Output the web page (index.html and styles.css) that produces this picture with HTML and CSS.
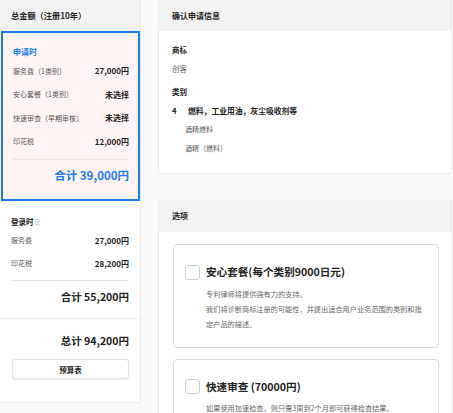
FILE: index.html
```html
<!DOCTYPE html>
<html lang="zh">
<head>
<meta charset="utf-8">
<link rel="stylesheet" href="styles.css">
</head>
<body>
<div class="page">
  <aside class="summary">
    <div class="sum-head">总金额（注册10年）</div>
    <div class="apply">
      <div class="apply-title">申请时</div>
      <div class="row"><span>服务费（1类别）</span><b>27,000円</b></div>
      <div class="row"><span>安心套餐（1类别）</span><b>未选择</b></div>
      <div class="row"><span>快速审查（早期审核）</span><b>未选择</b></div>
      <div class="row"><span>印花税</span><b>12,000円</b></div>
      <div class="subtotal blue">合计 39,000円</div>
    </div>
    <div class="reg">
      <div class="reg-title">登录时<span>※</span></div>
      <div class="row"><span>服务费</span><b>27,000円</b></div>
      <div class="row"><span>印花税</span><b>28,200円</b></div>
      <div class="subtotal">合计 55,200円</div>
    </div>
    <div class="total">
      <div class="total-amt">总计 94,200円</div>
      <button class="budget">预算表</button>
    </div>
  </aside>
  <main class="main">
    <section class="card">
      <div class="card-head">确认申请信息</div>
      <div class="card-body info">
        <div class="lbl">商标</div>
        <div class="val">创客</div>
        <div class="lbl lbl2">类别</div>
        <div class="cls"><span class="num">4</span><span>燃料，工业用油，灰尘吸收剂等</span></div>
        <div class="item">酒精燃料</div>
        <div class="item">酒精（燃料）</div>
      </div>
    </section>
    <section class="card card2">
      <div class="card-head">选项</div>
      <div class="options">
        <div class="opt">
          <div class="opt-head"><span class="chk"></span><span class="opt-title">安心套餐(每个类别9000日元)</span></div>
          <div class="opt-desc">专利律师将提供强有力的支持。<br>我们将诊断商标注册的可能性，并提出适合用户业务范围的类别和指定产品的描述。</div>
        </div>
        <div class="opt">
          <div class="opt-head"><span class="chk"></span><span class="opt-title">快速审查 (70000円)</span></div>
          <div class="opt-desc">如果使用加速检查，则只需3周到2个月即可获得检查结果。</div>
        </div>
      </div>
    </section>
  </main>
</div>
</body>
</html>
```
FILE: styles.css
```css
* { box-sizing: border-box; }
html, body { margin: 0; padding: 0; }
body {
  background: #fafafa;
  font-family: "Noto Sans CJK SC", "Noto Sans", sans-serif;
  color: #222;
  width: 453px;
  height: 413px;
  overflow: hidden;
}
.page {
  display: flex;
  align-items: flex-start;
  gap: 17px;
}
.summary {
  width: 141px;
  flex: none;
  background: #fff;
  border-right: 1px solid #ececec;
  border-bottom: 1px solid #ececec;
}
.sum-head {
  height: 31px;
  background: #f2f2f2;
  font-size: 8.2px;
  font-weight: 700;
  line-height: 31px;
  padding-left: 11px;
}
.apply {
  margin-left: 1px;
  border: 2px solid #1a7cf2;
  background: #fff4f3;
  padding: 14px 9px 16px 10px;
  height: 170px;
}
.apply-title {
  font-size: 8px;
  font-weight: 700;
  color: #1a7cf2;
  line-height: 10px;
  margin-bottom: 2px;
}
.row {
  height: 23.5px;
  display: flex;
  align-items: center;
  justify-content: space-between;
  font-size: 7px;
  color: #555;
}
.row b {
  font-size: 8px;
  color: #222;
  font-weight: 700;
}
.subtotal {
  margin-top: 6px;
  border-top: 1px solid #e6e6e6;
  padding-top: 8px;
  text-align: right;
  font-size: 10.5px;
  font-weight: 700;
  line-height: 16px;
}
.subtotal.blue {
  color: #1a7cf2;
  font-size: 11.5px;
  padding-top: 7px;
}
.reg {
  padding: 16px 11px 13px 11px;
  border-bottom: 1px solid #eeeeee;
}
.reg .row { height: 23px; }
.reg-title {
  font-size: 7.5px;
  font-weight: 700;
  line-height: 10px;
  margin-bottom: 1.5px;
}
.reg-title span { color: #999; font-weight: 400; }
.reg .subtotal { margin-top: 5.5px; }
.total {
  padding: 14px 11px 23px 12px;
}
.total-amt {
  text-align: right;
  font-size: 10.5px;
  font-weight: 700;
  line-height: 16px;
}
.budget {
  display: block;
  width: 100%;
  height: 20px;
  margin-top: 10px;
  background: #fff;
  border: 1px solid #e4e4e4;
  border-radius: 3px;
  box-shadow: 0 1px 2px rgba(0,0,0,0.08);
  font-family: inherit;
  font-size: 7.5px;
  font-weight: 700;
  color: #222;
  padding: 0;
}
.main {
  width: 294px;
  flex: none;
  display: flex;
  flex-direction: column;
  gap: 26px;
}
.card {
  background: #fff;
  border: 1px solid #ececec;
  border-top: none;
}
.card-head {
  height: 31px;
  background: #f2f2f2;
  font-size: 8px;
  font-weight: 700;
  line-height: 31px;
  padding-left: 13px;
}
.card2 .card-head { height: 32px; line-height: 32px; }
.info {
  padding: 10px 13px 16px 13px;
  font-size: 7.5px;
  line-height: 18.5px;
}
.lbl { font-weight: 700; }
.lbl2 { margin-top: 5px; }
.val { color: #666; }
.cls {
  font-weight: 700;
  font-size: 7.8px;
  display: flex;
}
.cls .num { width: 16px; }
.item {
  color: #555;
  padding-left: 13px;
  font-size: 7px;
}
.options {
  padding: 12px 12px 10px 14px;
  display: flex;
  flex-direction: column;
  gap: 11px;
}
.opt {
  border: 1px solid #dcdcdc;
  border-radius: 4px;
  padding: 19px 12px 15px 11px;
}
.opt-head {
  display: flex;
  align-items: center;
  gap: 6px;
  height: 16px;
}
.chk {
  width: 15px;
  height: 15px;
  border: 1px solid #cfcfcf;
  border-radius: 3px;
  background: #fff;
  flex: none;
}
.opt-title {
  font-size: 10.6px;
  font-weight: 700;
  line-height: 16px;
}
.opt-desc {
  margin-top: 6.5px;
  padding-left: 21px;
  font-size: 7.2px;
  line-height: 15px;
  color: #666;
}
```
